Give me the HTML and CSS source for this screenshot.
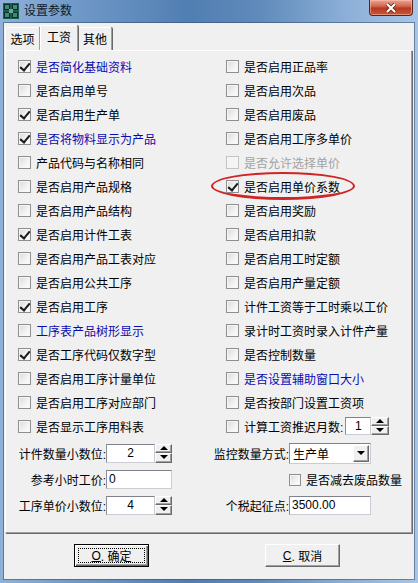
FILE: index.html
```html
<!DOCTYPE html>
<html lang="zh-CN">
<head>
  <meta charset="UTF-8">
  <title>设置参数</title>
  <link rel="stylesheet" href="styles.css">
</head>
<body>
  <div class="window">
    <div class="titlebar">
      <svg class="app-icon" viewBox="0 0 16 16" width="16" height="16">
        <rect x="0" y="0" width="16" height="16" fill="#1f5a4e"/>
        <rect x="1" y="1" width="6" height="6" fill="#0c2f29"/>
        <rect x="9" y="1" width="6" height="6" fill="#0c2f29"/>
        <rect x="1" y="9" width="6" height="6" fill="#0c2f29"/>
        <rect x="9" y="9" width="6" height="6" fill="#0c2f29"/>
        <rect x="2" y="2" width="4" height="4" fill="#3d8c78"/>
        <rect x="10" y="2" width="4" height="4" fill="#3d8c78"/>
        <rect x="2" y="10" width="4" height="4" fill="#3d8c78"/>
        <rect x="10" y="10" width="4" height="4" fill="#3d8c78"/>
        <rect x="6" y="6" width="4" height="4" fill="#5fae98"/>
      </svg>
      <span class="title">设置参数</span>
      <div class="close-btn">
        <svg viewBox="0 0 12 10" width="12" height="10">
          <path d="M2 1 L10 9 M10 1 L2 9" stroke="#5b1c12" stroke-width="3.6" fill="none"/>
          <path d="M2 1 L10 9 M10 1 L2 9" stroke="#fff" stroke-width="2.2" fill="none"/>
        </svg>
      </div>
    </div>

    <div class="client">
      <div class="tabs">
        <div class="tab tab-a">选项</div>
        <div class="tab tab-b active">工资</div>
        <div class="tab tab-c">其他</div>
      </div>

      <div class="panel">
        <div class="options">
          <!-- left column -->
          <div class="opt blue"><span class="cb on"></span>是否简化基础资料</div>
          <div class="opt"><span class="cb"></span>是否启用单号</div>
          <div class="opt"><span class="cb on"></span>是否启用生产单</div>
          <div class="opt blue"><span class="cb on"></span>是否将物料显示为产品</div>
          <div class="opt"><span class="cb"></span>产品代码与名称相同</div>
          <div class="opt"><span class="cb"></span>是否启用产品规格</div>
          <div class="opt"><span class="cb"></span>是否启用产品结构</div>
          <div class="opt"><span class="cb on"></span>是否启用计件工表</div>
          <div class="opt"><span class="cb"></span>是否启用产品工表对应</div>
          <div class="opt"><span class="cb"></span>是否启用公共工序</div>
          <div class="opt"><span class="cb on"></span>是否启用工序</div>
          <div class="opt blue"><span class="cb"></span>工序表产品树形显示</div>
          <div class="opt"><span class="cb on"></span>是否工序代码仅数字型</div>
          <div class="opt"><span class="cb"></span>是否启用工序计量单位</div>
          <div class="opt"><span class="cb"></span>是否启用工序对应部门</div>
          <div class="opt"><span class="cb"></span>是否显示工序用料表</div>

          <!-- right column -->
          <div class="opt"><span class="cb"></span>是否启用正品率</div>
          <div class="opt"><span class="cb"></span>是否启用次品</div>
          <div class="opt"><span class="cb"></span>是否启用废品</div>
          <div class="opt"><span class="cb"></span>是否启用工序多单价</div>
          <div class="opt off"><span class="cb"></span>是否允许选择单价</div>
          <div class="opt"><span class="ring"></span><span class="cb on"></span>是否启用单价系数</div>
          <div class="opt"><span class="cb"></span>是否启用奖励</div>
          <div class="opt"><span class="cb"></span>是否启用扣款</div>
          <div class="opt"><span class="cb"></span>是否启用工时定额</div>
          <div class="opt"><span class="cb"></span>是否启用产量定额</div>
          <div class="opt"><span class="cb"></span>计件工资等于工时乘以工价</div>
          <div class="opt"><span class="cb"></span>录计时工资时录入计件产量</div>
          <div class="opt"><span class="cb"></span>是否控制数量</div>
          <div class="opt blue"><span class="cb"></span>是否设置辅助窗口大小</div>
          <div class="opt"><span class="cb"></span>是否按部门设置工资项</div>
          <div class="opt"><span class="cb"></span>计算工资推迟月数:
            <div class="spin spin-small">
              <input class="txt num-small" type="text" value="1" readonly>
              <div class="spin-btns"><span class="up"></span><span class="down"></span></div>
            </div>
          </div>
        </div>

        <div class="fields">
          <div class="col col-left">
            <div class="field">
              <span class="label">计件数量小数位:</span>
              <div class="spin">
                <input class="txt num" type="text" value="2" readonly>
                <div class="spin-btns"><span class="up"></span><span class="down"></span></div>
              </div>
            </div>
            <div class="field">
              <span class="label">参考小时工价:</span>
              <input class="txt wide" type="text" value="0" readonly>
            </div>
            <div class="field">
              <span class="label">工序单价小数位:</span>
              <div class="spin">
                <input class="txt num" type="text" value="4" readonly>
                <div class="spin-btns"><span class="up"></span><span class="down"></span></div>
              </div>
            </div>
          </div>
          <div class="col col-right">
            <div class="field">
              <span class="label">监控数量方式:</span>
              <div class="select">
                <span class="select-value">生产单</span>
                <span class="drop"><span class="down"></span></span>
              </div>
            </div>
            <div class="field check-field">
              <span class="cb"></span>是否减去废品数量
            </div>
            <div class="field">
              <span class="label">个税起征点:</span>
              <input class="txt long" type="text" value="3500.00" readonly>
            </div>
          </div>
        </div>
      </div>

      <div class="actions">
        <button class="btn default"><span class="focus"><u>O</u>. 确定</span></button>
        <button class="btn"><span class="focus-none"><u>C</u>. 取消</span></button>
      </div>
    </div>
  </div>
</body>
</html>
```

FILE: styles.css
```css
* {
  box-sizing: border-box;
}

body {
  margin: 0;
  font-family: "Liberation Sans", "Noto Sans CJK SC", sans-serif;
  font-size: 12px;
  color: #000;
  background: #fff;
}

.window {
  width: 418px;
  height: 583px;
  display: flex;
  flex-direction: column;
  background: linear-gradient(90deg, #8fb1d9 0%, #7099c8 18%, #517eb2 45%, #5f8aba 62%, #8aaed7 82%, #a9c5e6 100%);
}

/* title bar */
.titlebar {
  height: 23px;
  display: flex;
  align-items: flex-start;
  padding-left: 3px;
  flex: none;
}

.app-icon {
  margin-top: 3px;
  flex: none;
}

.title {
  margin-left: 5px;
  line-height: 22px;
  font-size: 12px;
  color: #0e1a28;
}

.close-btn {
  margin-left: auto;
  margin-right: 5px;
  width: 44px;
  height: 16px;
  display: flex;
  align-items: center;
  justify-content: center;
  border: 1px solid #5e2218;
  border-top: none;
  border-radius: 0 0 4px 4px;
  background: linear-gradient(#e9a594 0%, #d46a52 40%, #b8391f 55%, #c9583a 100%);
  box-shadow: inset 0 0 0 1px rgba(255, 200, 180, 0.5);
}

/* client area */
.client {
  flex: 1;
  margin: 0 4px 4px;
  padding: 0 2px 0 1px;
  background: #f0f0f0;
  display: flex;
  flex-direction: column;
  box-shadow: 0 0 0 1px rgba(50, 75, 110, 0.55);
}

.tabs {
  height: 27px;
  display: flex;
  align-items: flex-end;
  flex: none;
}

.tab {
  height: 23px;
  display: flex;
  align-items: center;
  justify-content: center;
  background: #f0f0f0;
  border-top: 1px solid #fff;
  border-left: 1px solid #fff;
  border-right: 1px solid #a0a0a0;
  box-shadow: 1px 0 0 #696969;
  border-radius: 2px 2px 0 0;
  padding-bottom: 1px;
}

.tab-a { width: 35px; }
.tab-b { width: 38px; }
.tab-c { width: 34px; }

.tab.active {
  height: 26px;
  margin-bottom: -1px;
  position: relative;
  z-index: 1;
  padding-bottom: 4px;
}

.panel {
  height: 483px;
  flex: none;
  border: 1px solid;
  border-color: #fff #a0a0a0 #a0a0a0 #fff;
  box-shadow: 1px 1px 0 #696969;
  padding-top: 3px;
}

.options {
  display: grid;
  grid-template-columns: 208px 1fr;
  grid-template-rows: repeat(16, 24px);
  grid-auto-flow: column;
}

.opt {
  display: flex;
  align-items: center;
  padding-left: 12px;
  white-space: nowrap;
  position: relative;
}

.opt.blue { color: #0a0ab0; }
.opt.off { color: #a3a3a3; }
.opt.off .cb { border-color: #c4c4c4; background: #f4f4f4; }

.cb {
  width: 13px;
  height: 13px;
  flex: none;
  margin-right: 5px;
  border: 1px solid #8e8f8f;
  background: linear-gradient(135deg, #d6d8db 0%, #eeeeef 45%, #fdfdfd 100%);
  box-shadow: inset 0 0 0 1px #f6f6f6;
  position: relative;
}

.cb.on::after {
  content: "";
  position: absolute;
  left: 3px;
  top: 0px;
  width: 4px;
  height: 8px;
  border: solid #1a1a1a;
  border-width: 0 2px 2px 0;
  transform: rotate(40deg);
}

.ring {
  position: absolute;
  left: -3px;
  top: -2px;
  width: 144px;
  height: 28px;
  border: 2px solid #d22424;
  border-bottom-width: 3px;
  border-radius: 50%;
  pointer-events: none;
}

/* text boxes and spinners */
.txt {
  height: 19px;
  margin: 0;
  padding: 0 2px;
  border: 1px solid #8c8f96;
  border-color: #7f828a #c9ccd2 #c9ccd2 #8c8f96;
  background: #fff;
  font: inherit;
  color: #000;
  outline: none;
}

.num { width: 49px; text-align: center; }
.num-small { width: 26px; height: 18px; text-align: center; }
.wide { width: 66px; }
.long { width: 82px; }

.spin {
  display: flex;
  align-items: stretch;
}

.spin-small {
  margin-left: 2px;
}

.spin-btns {
  width: 17px;
  display: flex;
  flex-direction: column;
}

.spin-small .spin-btns {
  width: 18px;
}

.spin-btns span,
.drop {
  flex: 1;
  display: flex;
  align-items: center;
  justify-content: center;
  background: #f0f0f0;
  border: 1px solid;
  border-color: #fff #696969 #696969 #fff;
  box-shadow: inset -1px -1px 0 #a0a0a0;
}

.up::after,
.down::after {
  content: "";
  border-left: 4px solid transparent;
  border-right: 4px solid transparent;
}

.up::after { border-bottom: 4px solid #000; }
.down::after { border-top: 4px solid #000; }

.spin-btns .down::after,
.spin-btns .up::after {
  margin-top: -1px;
}

.drop .down {
  display: flex;
}

/* bottom fields */
.fields {
  display: grid;
  grid-template-columns: 200px 1fr;
  margin-top: 2px;
}

.col {
  display: grid;
  grid-template-rows: repeat(3, 26px);
}

.field {
  display: flex;
  align-items: center;
  white-space: nowrap;
}

.label {
  text-align: right;
  flex: none;
}

.col-left .label { width: 100px; }
.col-right .label { width: 83px; }

.check-field {
  padding-left: 83px;
  padding-top: 1px;
}

.check-field .cb {
  width: 12px;
  height: 12px;
}

.select {
  width: 82px;
  height: 21px;
  display: flex;
  align-items: center;
  border: 1px solid;
  border-color: #7f828a #c9ccd2 #c9ccd2 #8c8f96;
  background: #fff;
  padding: 1px;
}

.select-value {
  flex: 1;
  padding-left: 2px;
}

.drop {
  flex: none;
  width: 16px;
  height: 17px;
}

/* buttons */
.actions {
  display: flex;
  padding-top: 11px;
  padding-left: 69px;
  gap: 116px;
}

.btn {
  width: 75px;
  height: 23px;
  padding: 0;
  font: inherit;
  color: #000;
  background: #f0f0f0;
  border: 1px solid;
  border-color: #fff #696969 #696969 #fff;
  box-shadow: inset -1px -1px 0 #a0a0a0;
  display: flex;
  align-items: stretch;
}

.btn.default {
  border: 1px solid #000;
  box-shadow: inset 1px 1px 0 #fff, inset -1px -1px 0 #696969, inset -2px -2px 0 #a0a0a0;
}

.focus,
.focus-none {
  flex: 1;
  margin: 3px;
  display: flex;
  align-items: center;
  justify-content: center;
  border: 1px dotted transparent;
}

.focus {
  border-color: #000;
}
```
